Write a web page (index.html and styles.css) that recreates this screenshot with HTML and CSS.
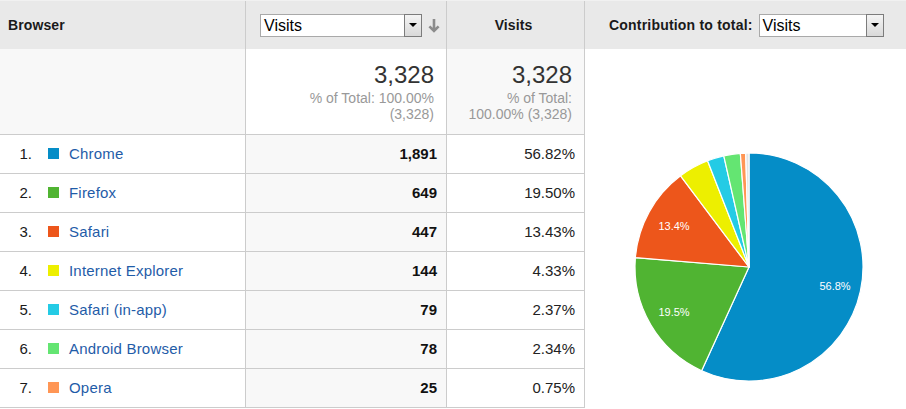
FILE: index.html
```html
<!DOCTYPE html>
<html>
<head>
<meta charset="utf-8">
<link rel="stylesheet" href="styles.css">
</head>
<body>
<div class="page">
  <div class="table">
    <div class="cell head h-browser">Browser</div>
    <div class="cell head h-metric">
      <div class="select sel-metric"><span class="sel-text">Visits</span><span class="sel-btn"><span class="tri"></span></span></div>
      <svg class="sort" width="12" height="15" viewBox="0 0 12 15"><path d="M6 1V13M1.4 8.3L6 13L10.6 8.3" fill="none" stroke="#8c8c8c" stroke-width="2.6"/></svg>
    </div>
    <div class="cell head h-visits">Visits</div>

    <div class="cell total t-browser"></div>
    <div class="cell total t-metric">
      <div class="big">3,328</div>
      <div class="sub">% of Total: 100.00%<br>(3,328)</div>
    </div>
    <div class="cell total t-visits">
      <div class="big">3,328</div>
      <div class="sub">% of Total:<br>100.00% (3,328)</div>
    </div>

    <div class="cell row r-name"><span class="num">1.</span><span class="sq c1"></span><span class="link">Chrome</span></div>
    <div class="cell row r-val">1,891</div>
    <div class="cell row r-pct">56.82%</div>

    <div class="cell row r-name"><span class="num">2.</span><span class="sq c2"></span><span class="link">Firefox</span></div>
    <div class="cell row r-val">649</div>
    <div class="cell row r-pct">19.50%</div>

    <div class="cell row r-name"><span class="num">3.</span><span class="sq c3"></span><span class="link">Safari</span></div>
    <div class="cell row r-val">447</div>
    <div class="cell row r-pct">13.43%</div>

    <div class="cell row r-name"><span class="num">4.</span><span class="sq c4"></span><span class="link">Internet Explorer</span></div>
    <div class="cell row r-val">144</div>
    <div class="cell row r-pct">4.33%</div>

    <div class="cell row r-name"><span class="num">5.</span><span class="sq c5"></span><span class="link">Safari (in-app)</span></div>
    <div class="cell row r-val">79</div>
    <div class="cell row r-pct">2.37%</div>

    <div class="cell row r-name"><span class="num">6.</span><span class="sq c6"></span><span class="link">Android Browser</span></div>
    <div class="cell row r-val">78</div>
    <div class="cell row r-pct">2.34%</div>

    <div class="cell row r-name"><span class="num">7.</span><span class="sq c7"></span><span class="link">Opera</span></div>
    <div class="cell row r-val">25</div>
    <div class="cell row r-pct">0.75%</div>
  </div>

  <div class="chart">
    <div class="chart-head">
      <span class="contrib">Contribution to total:</span>
      <div class="select sel-contrib"><span class="sel-text">Visits</span><span class="sel-btn"><span class="tri"></span></span></div>
    </div>
    <svg class="pie" width="321" height="360" viewBox="0 0 321 360">
      <g stroke="#ffffff" stroke-width="1.2" stroke-linejoin="round">
        <path fill="#058dc7" d="M164 218L164 104A114 114 0 1 1 116.63 321.69Z"/>
        <path fill="#50b432" d="M164 218L116.63 321.69A114 114 0 0 1 50.39 208.56Z"/>
        <path fill="#ed561b" d="M164 218L50.39 208.56A114 114 0 0 1 95.55 126.83Z"/>
        <path fill="#edef00" d="M164 218L95.55 126.83A114 114 0 0 1 122.57 111.8Z"/>
        <path fill="#24cbe5" d="M164 218L122.57 111.8A114 114 0 0 1 138.78 106.83Z"/>
        <path fill="#64e572" d="M164 218L138.78 106.83A114 114 0 0 1 155.34 104.33Z"/>
        <path fill="#ff9655" d="M164 218L155.34 104.33A114 114 0 0 1 160.71 104.05Z"/>
        <path fill="#e4e4e4" d="M164 218L160.71 104.05A114 114 0 0 1 164 104Z"/>
      </g>
      <g class="lbl" fill="#ffffff" text-anchor="middle">
        <text x="250" y="241">56.8%</text>
        <text x="89" y="267">19.5%</text>
        <text x="89" y="181">13.4%</text>
      </g>
    </svg>
  </div>
</div>
</body>
</html>
```

FILE: styles.css
```css
html, body {
  margin: 0;
  padding: 0;
  background: #ffffff;
  overflow: hidden;
}

body {
  font-family: "Liberation Sans", Arial, sans-serif;
  color: #222222;
}

.page {
  display: flex;
  width: 906px;
  height: 409px;
  border-top: 1px solid #f1f1f1;
  box-sizing: border-box;
}

.table {
  display: grid;
  grid-template-columns: 246px 201px 138px;
  grid-template-rows: 48px 86px repeat(7, 39px);
  width: 585px;
  flex: none;
}

.cell {
  box-sizing: border-box;
  border-right: 1px solid #cccccc;
  display: flex;
}

.head {
  background: #e9e9e9;
  align-items: center;
  font-weight: bold;
  font-size: 14px;
  color: #1a1a1a;
  letter-spacing: 0.1px;
}

.h-browser {
  padding-left: 8px;
}

.h-metric {
  padding-left: 14px;
  gap: 6px;
}

.h-visits {
  justify-content: center;
  padding-right: 4px;
}

.select {
  box-sizing: border-box;
  height: 23px;
  border: 1px solid #a9a9a9;
  background: #ffffff;
  display: flex;
  align-items: stretch;
  justify-content: space-between;
  font-weight: normal;
}

.sel-metric {
  width: 162px;
}

.sel-contrib {
  width: 125px;
}

.sel-text {
  font-size: 16px;
  color: #000000;
  padding-left: 3px;
  line-height: 21px;
  letter-spacing: 0;
}

.sel-btn {
  box-sizing: border-box;
  width: 18px;
  margin: -1px -1px -1px 0;
  border: 1px solid #7c7c7c;
  background: linear-gradient(#f4f4f4, #d9d9d9);
  display: flex;
  align-items: center;
  justify-content: center;
}

.tri {
  width: 0;
  height: 0;
  border-left: 4px solid transparent;
  border-right: 4px solid transparent;
  border-top: 4px solid #000000;
}

.sort {
  display: block;
}

.total {
  border-bottom: 1px solid #cccccc;
  flex-direction: column;
  align-items: flex-end;
  padding: 12px 12px 0 0;
}

.t-browser,
.t-visits {
  background: #f8f8f8;
}

.t-metric {
  background: #ffffff;
}

.big {
  font-size: 24px;
  line-height: 28px;
  color: #333333;
}

.sub {
  margin-top: 1px;
  font-size: 14px;
  line-height: 16px;
  color: #999999;
  text-align: right;
}

.row {
  border-bottom: 1px solid #cccccc;
  align-items: center;
  font-size: 15px;
  padding-bottom: 2px;
}

.r-name {
  background: #ffffff;
}

.r-val {
  background: #f8f8f8;
  justify-content: flex-end;
  padding-right: 9px;
  font-weight: bold;
  color: #111111;
}

.r-pct {
  background: #ffffff;
  justify-content: flex-end;
  padding-right: 9px;
  color: #222222;
}

.num {
  width: 32px;
  text-align: right;
  color: #1a1a1a;
}

.sq {
  width: 11px;
  height: 11px;
  margin-left: 16px;
  margin-right: 10px;
  flex: none;
}

.c1 { background: #058dc7; }
.c2 { background: #50b432; }
.c3 { background: #ed561b; }
.c4 { background: #edef00; }
.c5 { background: #24cbe5; }
.c6 { background: #64e572; }
.c7 { background: #ff9655; }

.link {
  color: #1f5ca8;
  letter-spacing: 0.2px;
}

.chart {
  width: 321px;
  flex: none;
  display: flex;
  flex-direction: column;
}

.chart-head {
  height: 48px;
  background: #e9e9e9;
  display: flex;
  align-items: center;
  padding-left: 24px;
  gap: 6px;
}

.contrib {
  font-weight: bold;
  font-size: 14px;
  color: #1a1a1a;
  letter-spacing: 0.2px;
}

.pie {
  display: block;
}

.lbl {
  font-family: "Liberation Sans", Arial, sans-serif;
  font-size: 11px;
}
```
